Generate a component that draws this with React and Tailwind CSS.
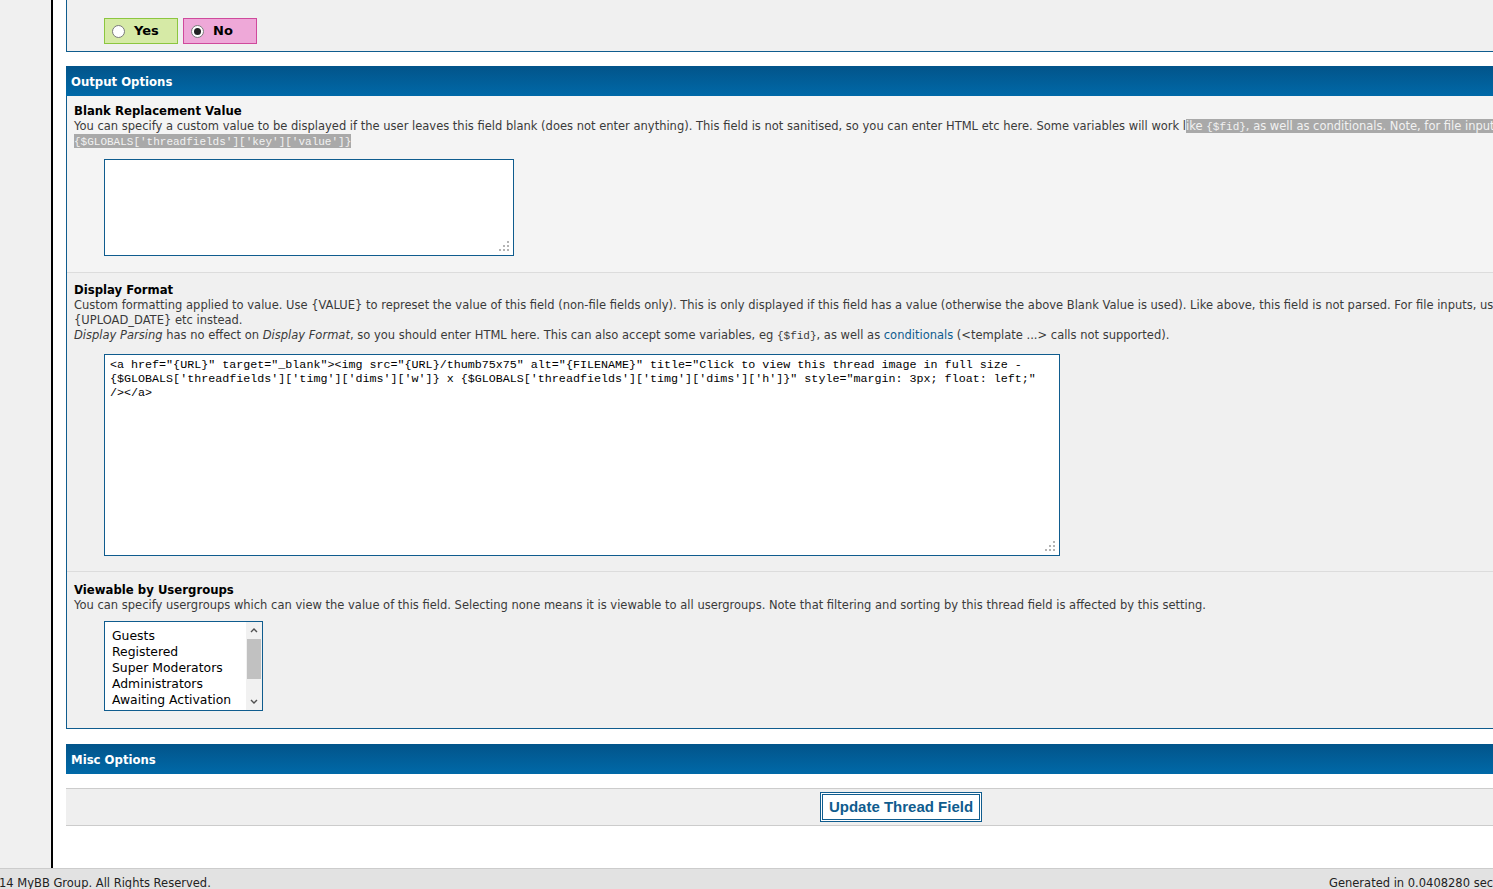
import React from 'react';

const verdana = { fontFamily: '"DejaVu Sans", Verdana, sans-serif' };

const Radio = ({ checked }) => (
  <span className="w-[13px] h-[13px] rounded-full border border-[#7a7a7a] bg-white flex items-center justify-center">
    {checked && <span className="w-[7px] h-[7px] rounded-full bg-[#222]" />}
  </span>
);

const SectionHeader = ({ title }) => (
  <div className="h-[30px] pt-[4px] bg-gradient-to-b from-[#02548a] to-[#0069a8] flex items-center pl-[5px] text-white font-bold text-[11.7px]">
    {title}
  </div>
);

const Code = ({ children }) => (
  <code className="font-['Liberation_Mono',monospace] text-[11px] leading-none whitespace-nowrap">{children}</code>
);

// dotted resize grip in the corner of a textarea
const Grip = () => (
  <svg className="absolute right-[4px] bottom-[4px]" width="12" height="12" viewBox="0 0 12 12">
    <g fill="#b4b4b4">
      <rect x="9" y="1" width="2" height="2" />
      <rect x="5" y="5" width="2" height="2" />
      <rect x="9" y="5" width="2" height="2" />
      <rect x="1" y="9" width="2" height="2" />
      <rect x="5" y="9" width="2" height="2" />
      <rect x="9" y="9" width="2" height="2" />
    </g>
  </svg>
);

const usergroups = ['Guests', 'Registered', 'Super Moderators', 'Administrators', 'Awaiting Activation', 'Moderators'];

const displayFormat = `<a href="{URL}" target="_blank"><img src="{URL}/thumb75x75" alt="{FILENAME}" title="Click to view this thread image in full size - {$GLOBALS['threadfields']['timg']['dims']['w']} x {$GLOBALS['threadfields']['timg']['dims']['h']}" style="margin: 3px; float: left;" /></a>`;

export default function App() {
  return (
    <div className="w-[1493px] h-[889px] overflow-hidden flex flex-col bg-white" style={verdana}>
      <div className="flex flex-1 min-h-0">
        {/* left nav strip */}
        <div className="w-[53px] shrink-0 bg-[#f0f0f0] border-r-2 border-black" />

        <div className="pl-[13px] w-[1683px] shrink-0">
          {/* tail of the previous options box */}
          <div className="-mt-[14px] border border-[#0f5c8e] bg-[#f0f0f0] pl-[37px] pt-[2px] pb-[7px]">
            <div className="text-[11.5px] text-[#333] h-[15px]">&nbsp;</div>
            <div className="flex gap-[5px] mt-[14px]">
              <label className="w-[74px] h-[26px] bg-[#d6eaa6] border border-[#8cc63f] flex items-center gap-[9px] pl-[7px] text-[13px] font-bold text-black">
                <Radio />
                Yes
              </label>
              <label className="w-[74px] h-[26px] bg-[#eea8d8] border border-[#cf4a9c] flex items-center gap-[9px] pl-[7px] text-[13px] font-bold text-black">
                <Radio checked />
                No
              </label>
            </div>
          </div>

          <div className="mt-[14px]">
            <SectionHeader title="Output Options" />
            <div className="border-l border-r border-b border-[#0f5c8e]">
              {/* blank replacement */}
              <div className="bg-[#f4f4f4] border-b border-[#dcdcdc] px-[7px] pt-[7px] pb-[16px]">
                <div className="text-[11.7px] font-bold text-black leading-[16px]">Blank Replacement Value</div>
                <div className="text-[11.5px] text-[#3a3a3a] leading-[15px] max-w-[1620px]">
                  You can specify a custom value to be displayed if the user leaves this field blank (does not enter anything). This field is not sanitised, so you can enter HTML etc here. Some variables will work l
                  <span className="bg-[#a9a9a9] text-[#f2f2f2]">
                    ike <Code>{'{$fid}'}</Code>, as well as conditionals. Note, for file inputs, use <Code>{"{$GLOBALS['threadfields']['key']['value']}"}</Code>
                  </span>
                </div>
                <div className="relative mt-[10px] ml-[30px] w-[410px] h-[97px]">
                  <textarea
                    readOnly
                    className="block w-full h-full bg-white border border-[#0f5c8e] outline-none resize-none"
                  />
                  <Grip />
                </div>
              </div>

              {/* display format */}
              <div className="bg-[#f0f0f0] border-b border-[#dcdcdc] px-[7px] pt-[9px] pb-[15px]">
                <div className="text-[11.7px] font-bold text-black leading-[16px]">Display Format</div>
                <div className="text-[11.5px] text-[#3a3a3a] leading-[15px] max-w-[1620px]">
                  Custom formatting applied to value. Use {'{VALUE}'} to represet the value of this field (non-file fields only). This is only displayed if this field has a value (otherwise the above Blank Value is used). Like above, this field is not parsed. For file inputs, use {'{URL}'}, {'{FILENAME}'}, {'{UPLOAD_DATE}'} etc instead.
                </div>
                <div className="text-[11.5px] text-[#3a3a3a] leading-[15px]">
                  <i>Display Parsing</i> has no effect on <i>Display Format</i>, so you should enter HTML here. This can also accept some variables, eg <Code>{'{$fid}'}</Code>, as well as <span className="text-[#0f5c8e]">conditionals</span> (&lt;template ...&gt; calls not supported).
                </div>
                <div className="relative mt-[11px] ml-[30px] w-[956px] h-[202px]">
                  <textarea
                    readOnly
                    defaultValue={displayFormat}
                    className="block w-full h-full bg-white border border-[#0f5c8e] outline-none resize-none px-[5px] py-[3px] text-[11.7px] leading-[14px] text-black font-['Liberation_Mono',monospace]"
                  />
                  <Grip />
                </div>
              </div>

              {/* usergroups */}
              <div className="bg-[#f0f0f0] px-[7px] pt-[10px] pb-[17px]">
                <div className="text-[11.7px] font-bold text-black leading-[16px]">Viewable by Usergroups</div>
                <div className="text-[11.5px] text-[#3a3a3a] leading-[15px]">
                  You can specify usergroups which can view the value of this field. Selecting none means it is viewable to all usergroups. Note that filtering and sorting by this thread field is affected by this setting.
                </div>
                <div className="mt-[8px] ml-[30px] w-[159px] h-[90px] bg-white border border-[#0f5c8e] flex overflow-hidden">
                  <div className="flex-1 pl-[7px] pt-[6px] text-[12.4px] leading-[16px] text-black">
                    {usergroups.map((g) => (
                      <div key={g} className="whitespace-nowrap">{g}</div>
                    ))}
                  </div>
                  <div className="w-[16px] bg-[#f1f1f1] flex flex-col items-center">
                    <svg width="16" height="17" viewBox="0 0 16 17">
                      <path d="M5 10 L8 7 L11 10" fill="none" stroke="#505050" strokeWidth="1.4" />
                    </svg>
                    <div className="w-[14px] h-[40px] bg-[#c1c1c1]" />
                    <div className="flex-1" />
                    <svg width="16" height="17" viewBox="0 0 16 17">
                      <path d="M5 7 L8 10 L11 7" fill="none" stroke="#505050" strokeWidth="1.4" />
                    </svg>
                  </div>
                </div>
              </div>
            </div>
          </div>

          <div className="mt-[15px]">
            <SectionHeader title="Misc Options" />
          </div>

          {/* form buttons */}
          <div className="mt-[14px] h-[38px] bg-[#efefef] border-t border-b border-[#cccccc] flex items-center justify-center">
            <button className="w-[162px] h-[30px] bg-white border-[3px] border-double border-[#0f5c8e] text-[#0f5c8e] font-bold text-[15px] font-['Liberation_Sans',Arial,sans-serif]">
              Update Thread Field
            </button>
          </div>
        </div>
      </div>

      {/* footer */}
      <div className="h-[21px] shrink-0 bg-[#e2e2e2] border-t border-[#cccccc] pt-[7px] flex justify-between text-[11.5px] leading-[14px] text-[#222] whitespace-nowrap overflow-hidden">
        <span className="-ml-[1px]">14 MyBB Group. All Rights Reserved.</span>
        <span className="w-[164px] overflow-hidden">Generated in 0.0408280 seconds</span>
      </div>
    </div>
  );
}
